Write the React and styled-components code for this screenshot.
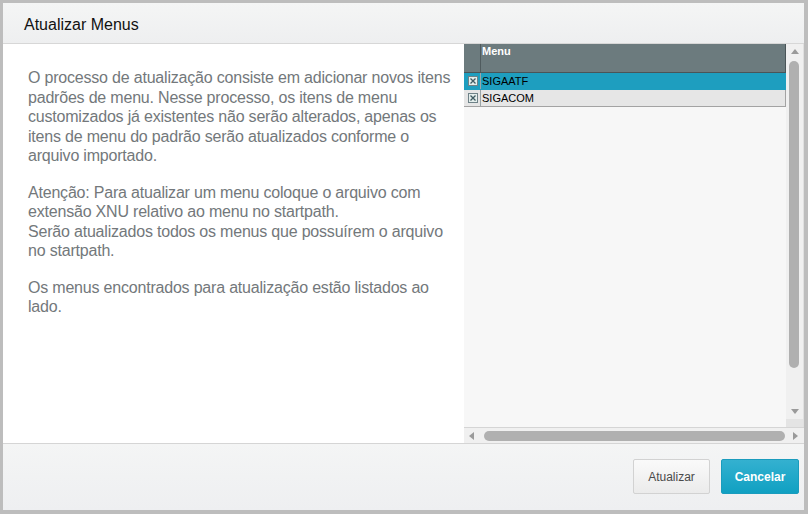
import React from "react";
import styled, { createGlobalStyle } from "styled-components";

const GlobalStyle = createGlobalStyle`
  html, body {
    margin: 0;
    padding: 0;
    background: #bdbdbd;
  }
  body {
    font-family: "Liberation Sans", Arial, sans-serif;
  }
`;

const rows = [
  { name: "SIGAATF", selected: true },
  { name: "SIGACOM", selected: false },
];

const Checkbox = () => (
  <svg width="10" height="10" viewBox="0 0 10 10">
    <rect x="0.5" y="0.5" width="9" height="9" fill="#e4eeec" stroke="#6f8288" />
    <path d="M2.5 2.5 L7.5 7.5 M7.5 2.5 L2.5 7.5" stroke="#3f5a62" strokeWidth="1.3" />
  </svg>
);

const Arrow = ({ dir }) => {
  const pts = {
    up: "0,6 4,1 8,6",
    down: "0,1 4,6 8,1",
    left: "6,0 1,4 6,8",
    right: "1,0 6,4 1,8",
  }[dir];
  return (
    <svg width="8" height="8" viewBox="0 0 8 8">
      <polygon points={pts} fill="#9a9a9a" />
    </svg>
  );
};

export default function App() {
  return (
    <>
      <GlobalStyle />
      <Dialog>
        <Header>Atualizar Menus</Header>
        <Body>
          <TextPanel>
            <p>
              O processo de atualização consiste em adicionar novos itens
              padrões de menu. Nesse processo, os itens de menu customizados já
              existentes não serão alterados, apenas os itens de menu do padrão
              serão atualizados conforme o arquivo importado.
            </p>
            <p>
              Atenção: Para atualizar um menu coloque o arquivo com extensão XNU
              relativo ao menu no startpath.
              <br />
              Serão atualizados todos os menus que possuírem o arquivo no
              startpath.
            </p>
            <p>Os menus encontrados para atualização estão listados ao lado.</p>
          </TextPanel>
          <GridPanel>
            <GridMain>
              <Table>
                <HeadRow>
                  <CheckCell />
                  <HeadCell>Menu</HeadCell>
                </HeadRow>
                {rows.map((r) => (
                  <Row key={r.name} $selected={r.selected}>
                    <CheckCell>
                      <Checkbox />
                    </CheckCell>
                    <Cell>{r.name}</Cell>
                  </Row>
                ))}
              </Table>
              <VScroll>
                <ArrowBox>
                  <Arrow dir="up" />
                </ArrowBox>
                <VTrack>
                  <VThumb />
                </VTrack>
                <ArrowBox>
                  <Arrow dir="down" />
                </ArrowBox>
                <Corner />
              </VScroll>
            </GridMain>
            <HScroll>
              <ArrowBox $h>
                <Arrow dir="left" />
              </ArrowBox>
              <HThumb />
              <ArrowBox $h>
                <Arrow dir="right" />
              </ArrowBox>
            </HScroll>
          </GridPanel>
        </Body>
        <Footer>
          <Button>Atualizar</Button>
          <Button $primary>Cancelar</Button>
        </Footer>
      </Dialog>
    </>
  );
}

const Dialog = styled.div`
  margin: 3px 4px 4px 3px;
  height: 507px;
  background: #fff;
  display: flex;
  flex-direction: column;
`;

const Header = styled.div`
  height: 41px;
  box-sizing: border-box;
  padding: 13px 0 0 21px;
  font-size: 16px;
  color: #111;
  background: linear-gradient(#f4f5f5, #eeeff0);
  border-bottom: 1px solid #d7d7d7;
  flex: none;
`;

const Body = styled.div`
  display: flex;
  height: 399px;
  flex: none;
`;

const TextPanel = styled.div`
  width: 461px;
  box-sizing: border-box;
  padding: 24px 4px 0 25px;
  font-size: 16px;
  letter-spacing: -0.2px;
  line-height: 19.5px;
  color: #73787b;

  p {
    margin: 0 0 17px;
  }
`;

const GridPanel = styled.div`
  flex: 1;
  display: flex;
  flex-direction: column;
  background: #f7f7f7;
`;

const GridMain = styled.div`
  flex: 1;
  display: flex;
`;

const Table = styled.div`
  flex: 1;
  display: flex;
  flex-direction: column;
`;

const HeadRow = styled.div`
  display: flex;
  height: 28px;
  background: #6c7b7e;
  border-bottom: 1px solid #4a5558;
  border-right: 1px solid #4a5558;
`;

const CheckCell = styled.div`
  width: 15px;
  flex: none;
  display: flex;
  align-items: center;
  justify-content: center;
  border-right: 1px solid #4f5b5e;
  padding-left: 1px;
`;

const HeadCell = styled.div`
  padding: 1px 1px;
  font-size: 11px;
  font-weight: bold;
  color: #fff;
`;

const Row = styled.div`
  display: flex;
  height: 16px;
  font-size: 11px;
  line-height: 16px;
  color: #000;
  background: ${(p) => (p.$selected ? "#1e9ebf" : "#e6e6e6")};
  border-bottom: 1px solid ${(p) => (p.$selected ? "#1e9ebf" : "#a3a3a3")};
  border-right: 1px solid ${(p) => (p.$selected ? "#1e9ebf" : "#a3a3a3")};

  ${CheckCell} {
    border-right-color: #9aa5a8;
  }
`;

const Cell = styled.div`
  padding-left: 1px;
`;

const VScroll = styled.div`
  width: 17px;
  flex: none;
  display: flex;
  flex-direction: column;
  background: #f0f0f0;
  border-right: 1px solid #e0e0e0;
`;

const ArrowBox = styled.div`
  width: ${(p) => (p.$h ? "16px" : "auto")};
  height: ${(p) => (p.$h ? "auto" : "15px")};
  flex: none;
  display: flex;
  align-items: center;
  justify-content: center;
`;

const VTrack = styled.div`
  flex: 1;
  padding: 2px 3px 2px 3px;
  display: flex;
`;

const VThumb = styled.div`
  width: 10px;
  height: 307px;
  border-radius: 5px;
  background: #b0b0b0;
`;

const Corner = styled.div`
  height: 8px;
  background: #e4e4e4;
`;

const HScroll = styled.div`
  height: 15px;
  display: flex;
  border-top: 1px solid #d5d5d5;
  background: #f0f0f0;
  align-items: center;
`;

const HThumb = styled.div`
  flex: 1;
  height: 10px;
  margin: 0 3px 0 4px;
  border-radius: 5px;
  background: #b0b0b0;
`;

const Footer = styled.div`
  flex: 1;
  border-top: 1px solid #d5d5d5;
  background: linear-gradient(#f4f5f5, #eeeff1);
  display: flex;
  justify-content: flex-end;
  align-items: flex-start;
  gap: 11px;
  padding: 15px 5px 0 0;
`;

const Button = styled.button`
  height: 35px;
  width: ${(p) => (p.$primary ? "78px" : "77px")};
  border-radius: 2px;
  font-family: "Liberation Sans", Arial, sans-serif;
  font-size: 12px;
  font-weight: ${(p) => (p.$primary ? "bold" : "normal")};
  color: ${(p) => (p.$primary ? "#fff" : "#4a4a4a")};
  border: 1px solid ${(p) => (p.$primary ? "#1a9cbd" : "#d2d2d2")};
  background: ${(p) =>
    p.$primary
      ? "linear-gradient(#34b1d0, #10a0c2)"
      : "linear-gradient(#fafafa, #ebebeb)"};
  padding: 0;
`;
